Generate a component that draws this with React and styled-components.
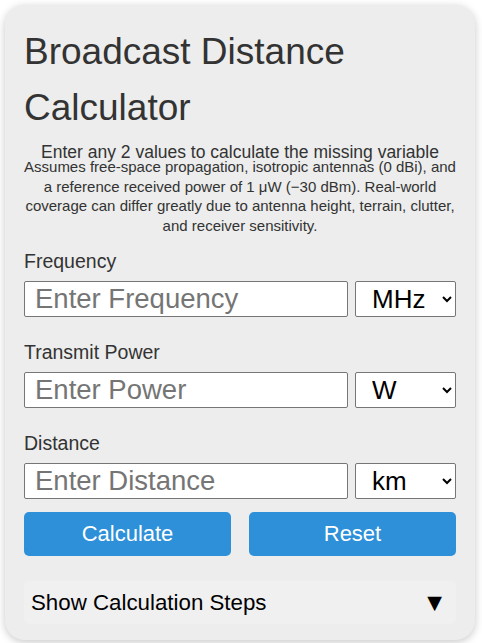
import React, {useState} from 'react'
import styled, {createGlobalStyle} from 'styled-components'

const GlobalStyle = createGlobalStyle`
  body {
    margin: 0;
    background: #fff;
    font-family: "Liberation Sans", Arial, sans-serif;
  }
`

const Page = styled.div`
  padding: 5px;
`

const Card = styled.div`
  width: 470px;
  box-sizing: border-box;
  padding: 19px 19px 16px;
  background: #ecedec;
  border-radius: 20px;
  box-shadow: 0 2px 8px rgba(0, 0, 0, 0.22);
  color: #333;
`

const Title = styled.h1`
  margin: 0;
  font-size: 37px;
  font-weight: normal;
  line-height: 56px;
  color: #333;
`

const Subtitle = styled.p`
  margin: 8px 0 0;
  font-size: 17.5px;
  line-height: 16px;
  text-align: center;
`

const Note = styled.p`
  margin: -3px 0 0;
  font-size: 15px;
  line-height: 19.5px;
  text-align: center;
`

const Fields = styled.div`
  margin-top: 15px;
  display: flex;
  flex-direction: column;
  gap: 24px;
`

const Field = styled.div`
  display: flex;
  flex-direction: column;
`

const Label = styled.label`
  font-size: 19.5px;
  line-height: 22px;
  margin-bottom: 9px;
  color: #333;
`

const InputRow = styled.div`
  display: grid;
  grid-template-columns: 324px 101px;
  gap: 7px;
`

const Input = styled.input`
  height: 36px;
  box-sizing: border-box;
  border: 1px solid #767676;
  border-radius: 2px;
  padding: 0 10px;
  font-family: inherit;
  font-size: 27.5px;
  background: #fff;
  color: #000;
  &::placeholder {
    color: #757575;
  }
`

const Select = styled.select`
  height: 36px;
  box-sizing: border-box;
  border: 1px solid #767676;
  border-radius: 2px;
  padding: 0 6px 0 12px;
  font-family: inherit;
  font-size: 26px;
  background: #fff;
  color: #000;
`

const Buttons = styled.div`
  margin-top: 13px;
  display: grid;
  grid-template-columns: 1fr 1fr;
  gap: 18px;
`

const Button = styled.button`
  height: 44px;
  border: none;
  border-radius: 5px;
  background: #2d90d8;
  color: #fff;
  font-family: inherit;
  font-size: 22px;
  cursor: pointer;
`

const Steps = styled.div`
  margin-top: 25px;
  height: 43px;
  box-sizing: border-box;
  padding: 0 9px 0 7px;
  display: flex;
  align-items: center;
  justify-content: space-between;
  background: #f0f0f0;
  border-radius: 6px;
  font-size: 22.3px;
  color: #000;
  cursor: pointer;
`

const Arrow = styled.span`
  font-size: 25px;
  line-height: 1;
`

const fields = [
  {label: 'Frequency', placeholder: 'Enter Frequency', units: ['MHz', 'kHz', 'GHz']},
  {label: 'Transmit Power', placeholder: 'Enter Power', units: ['W', 'kW', 'mW', 'dBm']},
  {label: 'Distance', placeholder: 'Enter Distance', units: ['km', 'm', 'mi']},
]

function App() {
  const [open, setOpen] = useState(false)

  return (
    <Page>
      <GlobalStyle />
      <Card>
        <Title>Broadcast Distance Calculator</Title>
        <Subtitle>Enter any 2 values to calculate the missing variable</Subtitle>
        <Note>
          Assumes free-space propagation, isotropic antennas (0 dBi), and a reference received power of 1 μW (−30 dBm). Real-world coverage can differ greatly due to antenna height, terrain, clutter, and receiver sensitivity.
        </Note>
        <Fields>
          {fields.map(f => (
            <Field key={f.label}>
              <Label>{f.label}</Label>
              <InputRow>
                <Input type="number" placeholder={f.placeholder} />
                <Select defaultValue={f.units[0]}>
                  {f.units.map(u => <option key={u}>{u}</option>)}
                </Select>
              </InputRow>
            </Field>
          ))}
        </Fields>
        <Buttons>
          <Button>Calculate</Button>
          <Button>Reset</Button>
        </Buttons>
        <Steps onClick={() => setOpen(!open)}>
          <span>Show Calculation Steps</span>
          <Arrow>{open ? '▲' : '▼'}</Arrow>
        </Steps>
      </Card>
    </Page>
  )
}

export default App
